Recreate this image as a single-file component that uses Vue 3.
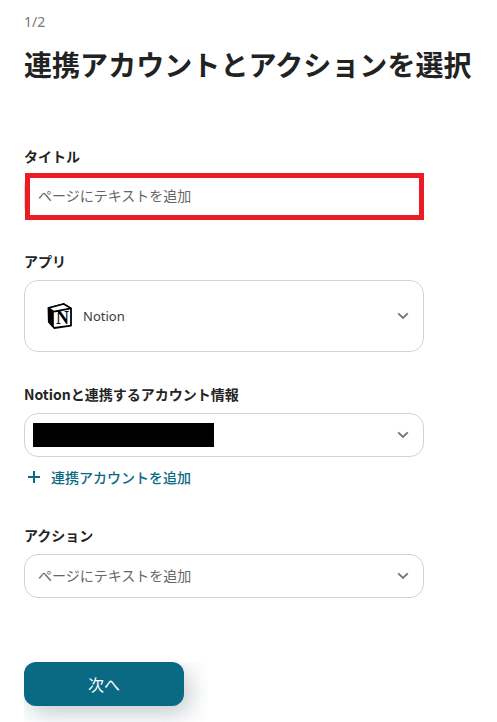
<script setup>
const placeholder = 'ページにテキストを追加'
</script>

<template>
  <main class="page">
    <p class="step">1/2</p>
    <h1 class="title">連携アカウントとアクションを選択</h1>

    <section class="group first">
      <label class="label">タイトル</label>
      <div class="annotated">
        <div class="field"><span class="placeholder">{{ placeholder }}</span></div>
        <div class="highlight"></div>
      </div>
    </section>

    <section class="group app">
      <label class="label">アプリ</label>
      <div class="field tall">
        <div class="app-value">
          <svg class="logo" viewBox="0 0 26 26" width="26" height="26" aria-hidden="true">
            <path d="M1.5 5 16.6 1 24 5.4V22.6L7.2 25 1.8 18.8Z" fill="#fff" stroke="#000" stroke-width="1.8" stroke-linejoin="round"/>
            <path d="M1.5 5 6.8 9.4V24.8L1.8 18.8Z" fill="#000"/>
            <path d="M1.5 5 16.6 1 24 5.4 6.8 8.6Z" fill="#fff" stroke="#000" stroke-width="1.6" stroke-linejoin="round"/>
            <text x="15.4" y="21.4" text-anchor="middle" class="logo-n">N</text>
          </svg>
          <span class="app-name">Notion</span>
        </div>
        <svg class="chevron" viewBox="0 0 12 8" width="12" height="8" aria-hidden="true"><path d="M1.2 1.4 6 6l4.8-4.6" /></svg>
      </div>
    </section>

    <section class="group account">
      <label class="label">Notionと連携するアカウント情報</label>
      <div class="field">
        <div class="redaction"></div>
        <svg class="chevron" viewBox="0 0 12 8" width="12" height="8" aria-hidden="true"><path d="M1.2 1.4 6 6l4.8-4.6" /></svg>
      </div>
      <a class="add">
        <svg viewBox="0 0 14 14" width="14" height="14" aria-hidden="true"><path d="M7 1v12M1 7h12" /></svg>
        <span>連携アカウントを追加</span>
      </a>
    </section>

    <section class="group action">
      <label class="label">アクション</label>
      <div class="field">
        <span class="placeholder">{{ placeholder }}</span>
        <svg class="chevron" viewBox="0 0 12 8" width="12" height="8" aria-hidden="true"><path d="M1.2 1.4 6 6l4.8-4.6" /></svg>
      </div>
    </section>

    <div class="button-clip">
      <button class="next" type="button">次へ</button>
    </div>
  </main>
</template>

<style scoped>
.page {
  box-sizing: border-box;
  width: 497px;
  height: 722px;
  padding: 13px 0 0 24px;
  overflow: hidden;
  background: #fff;
  color: #242424;
  font-family: "Noto Sans CJK JP", "Noto Sans", sans-serif;
}
.step {
  margin: 0;
  font-family: "Noto Sans", "Noto Sans CJK JP", sans-serif;
  font-size: 14px;
  line-height: 18px;
  color: #777;
}
.title {
  margin: 11px 0 0;
  font-size: 28px;
  line-height: 44px;
  font-weight: 700;
  letter-spacing: 0.06px;
  white-space: nowrap;
  color: #222;
}
.group { width: 400px; }
.first { margin-top: 60px; }
.app { margin-top: 31px; }
.account { margin-top: 32px; }
.action { margin-top: 38px; }
.label {
  display: block;
  height: 20px;
  font-size: 14px;
  line-height: 20px;
  font-weight: 700;
  color: #242424;
  white-space: nowrap;
}
.annotated {
  position: relative;
  margin-top: 7px;
}
.field {
  box-sizing: border-box;
  display: flex;
  align-items: center;
  justify-content: space-between;
  height: 44px;
  margin-top: 9px;
  padding: 0 13px;
  border: 1px solid #cfd2d8;
  border-radius: 14px;
  background: #fff;
}
.annotated .field { margin-top: 0; height: 47px; }
.tall { height: 72px; }
.highlight {
  position: absolute;
  left: 1px;
  right: 0;
  top: 0;
  bottom: 0;
  border: 5px solid #ed1c24;
}
.placeholder {
  margin-bottom: 2px;
  font-size: 14px;
  color: #666;
  white-space: nowrap;
}
.annotated .placeholder { margin-bottom: 4px; }
.app-value {
  display: flex;
  align-items: center;
  gap: 10px;
  padding-left: 9px;
}
.logo { display: block; }
.logo-n {
  font-family: "Liberation Serif", serif;
  font-size: 18px;
  font-weight: 700;
  fill: #000;
}
.app-name {
  font-family: "Noto Sans", sans-serif;
  font-size: 13px;
  color: #3a3a3a;
}
.chevron {
  margin-left: auto;
  margin-right: 1px;
  flex: none;
  fill: none;
  stroke: #777;
  stroke-width: 1.9;
}
.redaction {
  width: 181px;
  height: 24px;
  margin-left: -5px;
  background: #000;
}
.add {
  display: flex;
  align-items: center;
  gap: 10px;
  height: 20px;
  margin-top: 10px;
  padding-left: 3px;
  font-size: 14px;
  font-weight: 500;
  color: #0a6a84;
}
.add svg {
  fill: none;
  stroke: #0a6a84;
  stroke-width: 2;
}
.button-clip {
  width: 184px;
  height: 60px;
  margin-top: 64px;
  overflow: hidden;
}
.next {
  display: block;
  width: 160px;
  height: 44px;
  padding: 0;
  border: 0;
  border-radius: 12px;
  background: #0a6a84;
  color: #fff;
  font-family: "Noto Sans CJK JP", sans-serif;
  font-size: 16px;
  box-shadow: 6px 8px 22px rgba(40, 60, 80, 0.26);
}
</style>
